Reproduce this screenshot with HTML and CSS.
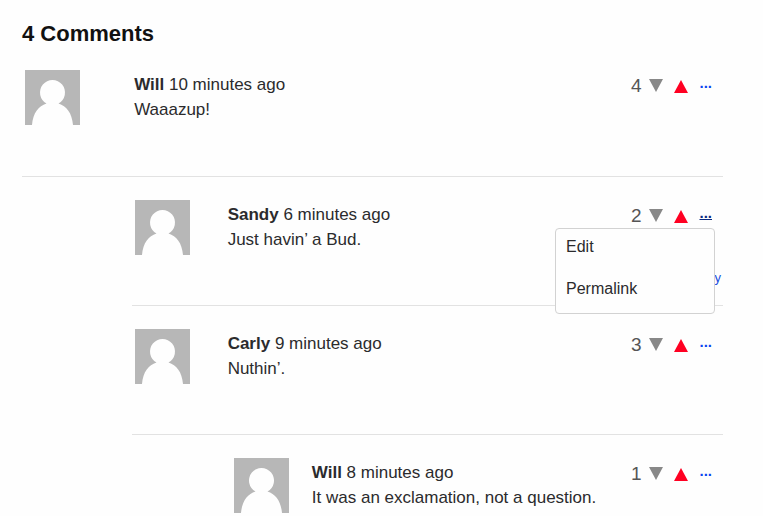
FILE: index.html
```html
<!DOCTYPE html>
<html lang="en">
<head>
<meta charset="utf-8">
<meta name="viewport" content="width=device-width, initial-scale=1">
<title>Comments</title>
<link rel="stylesheet" href="styles.css">
</head>
<body>
<svg class="symbols" aria-hidden="true">
  <symbol id="person" viewBox="0 0 55 55">
    <rect width="55" height="55" fill="#b7b7b7"/>
    <path d="M7 55C8 43 13.500 36 21.500 33.500A12.500 12.500 0 1 1 33.500 33.500C41.500 36 47 43 48 55Z" fill="#fefefe"/>
  </symbol>
  <symbol id="down" viewBox="0 0 14 13"><path d="M0 0H14L7 13Z" fill="currentColor"/></symbol>
  <symbol id="up" viewBox="0 0 14 13"><path d="M0 13H14L7 0Z" fill="currentColor"/></symbol>
</svg>
<main class="comments">
  <h1 class="title">4 Comments</h1>
  <ul class="thread">
    <li>
      <article class="comment">
        <svg class="avatar" role="img" aria-label="Will"><use href="#person"/></svg>
        <div class="text"><p><strong>Will</strong> 10 minutes ago</p><p>Waaazup!</p></div>
        <div class="actions">
          <span class="score">4</span>
          <button class="vote" type="button" aria-label="Vote down"><svg><use href="#down"/></svg></button>
          <button class="vote vote-up" type="button" aria-label="Vote up"><svg><use href="#up"/></svg></button>
          <a class="more" href="#" aria-label="More">...</a>
        </div>
      </article>
      <ul class="thread replies">
        <li>
          <article class="comment comment-reply">
            <svg class="avatar" role="img" aria-label="Sandy"><use href="#person"/></svg>
            <div class="text"><p><strong>Sandy</strong> 6 minutes ago</p><p>Just havin’ a Bud.</p></div>
            <div class="actions">
              <span class="score">2</span>
              <button class="vote" type="button" aria-label="Vote down"><svg><use href="#down"/></svg></button>
              <button class="vote vote-up" type="button" aria-label="Vote up"><svg><use href="#up"/></svg></button>
              <a class="more more-open" href="#" aria-label="More">...</a>
              <div class="menu"><a href="#">Edit</a><a href="#">Permalink</a></div>
            </div>
            <a class="reply" href="#">Reply</a>
          </article>
        </li>
        <li>
          <article class="comment comment-reply">
            <svg class="avatar" role="img" aria-label="Carly"><use href="#person"/></svg>
            <div class="text"><p><strong>Carly</strong> 9 minutes ago</p><p>Nuthin’.</p></div>
            <div class="actions">
              <span class="score">3</span>
              <button class="vote" type="button" aria-label="Vote down"><svg><use href="#down"/></svg></button>
              <button class="vote vote-up" type="button" aria-label="Vote up"><svg><use href="#up"/></svg></button>
              <a class="more" href="#" aria-label="More">...</a>
            </div>
          </article>
          <ul class="thread replies-deep">
            <li>
              <article class="comment comment-last">
                <svg class="avatar" role="img" aria-label="Will"><use href="#person"/></svg>
                <div class="text"><p><strong>Will</strong> 8 minutes ago</p><p>It was an exclamation, not a question.</p></div>
                <div class="actions">
                  <span class="score">1</span>
                  <button class="vote" type="button" aria-label="Vote down"><svg><use href="#down"/></svg></button>
                  <button class="vote vote-up" type="button" aria-label="Vote up"><svg><use href="#up"/></svg></button>
                  <a class="more" href="#" aria-label="More">...</a>
                </div>
              </article>
            </li>
          </ul>
        </li>
      </ul>
    </li>
  </ul>
</main>
</body>
</html>
```
FILE: styles.css
```css
* {
  box-sizing: border-box;
}

body {
  margin: 0;
  background: #fefefe;
  color: #2b2b2d;
  font: 17px/25px "Liberation Sans", Arial, sans-serif;
}

.symbols {
  position: absolute;
  width: 0;
  height: 0;
}

.comments {
  padding: 20px 40px 0 22px;
}

.title {
  margin: 0;
  color: #111;
  font-size: 22px;
  line-height: 27px;
}

.thread {
  margin: 0;
  padding: 0;
  list-style: none;
}

.replies {
  padding-left: 110px;
}

.replies-deep {
  padding-left: 99px;
}

.comment {
  display: grid;
  grid-template-columns: 15% 1fr auto;
  grid-template-rows: 55px auto;
  column-gap: 7px;
  min-height: 130px;
  padding-top: 23px;
  border-bottom: 1px solid #e2e2e2;
}

.comment-reply {
  min-height: 129px;
}

.comment-last {
  min-height: 0;
  border-bottom: 0;
}

.avatar {
  display: block;
  width: 55px;
  height: 55px;
  margin-left: 3px;
}

.text {
  padding-top: 2px;
}

.text p {
  margin: 0;
  white-space: nowrap;
}

.actions {
  position: relative;
  display: flex;
  align-items: center;
  align-self: start;
  height: 30px;
  padding-right: 11px;
}

.score {
  margin-right: 8px;
  color: #555;
  font-size: 19px;
}

.vote {
  display: block;
  margin: 0 11px 0 0;
  padding: 0;
  border: 0;
  background: none;
  color: #888;
}

.vote svg {
  display: block;
  width: 14px;
  height: 13px;
}

.vote-up {
  padding-top: 2px;
  color: #ff0022;
}

.more {
  padding-bottom: 5px;
  color: #0a45f0;
  font-size: 15px;
  font-weight: bold;
  text-decoration: none;
}

.more-open {
  color: #0b2a80;
  text-decoration: underline;
}

.menu {
  position: absolute;
  top: 28px;
  right: 8px;
  width: 160px;
  height: 86px;
  border: 1px solid #d2d2d2;
  border-radius: 4px;
  background: #fefefe;
}

.menu a {
  display: block;
  padding: 5px 10px 12px;
  color: #2b2b2d;
  font-size: 16px;
  text-decoration: none;
}

.reply {
  grid-column: 3;
  justify-self: end;
  padding-right: 2px;
  padding-top: 10px;
  color: #1a4fe0;
  font-size: 13px;
  text-decoration: none;
}
```
